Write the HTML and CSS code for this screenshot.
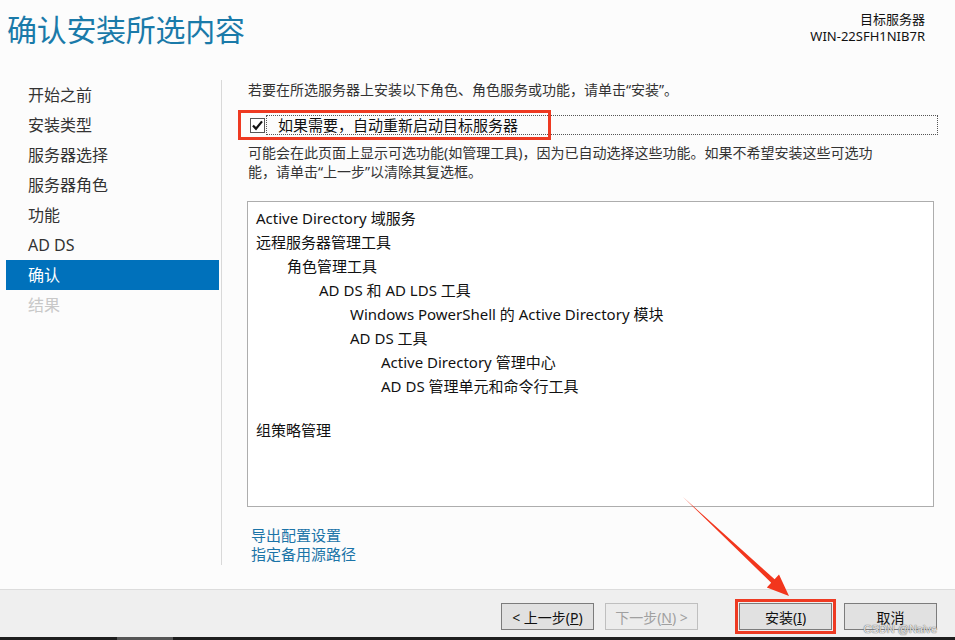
FILE: index.html
```html
<!DOCTYPE html>
<html lang="zh-CN">
<head>
	<meta charset="UTF-8">
	<title>确认安装所选内容</title>
	<link rel="stylesheet" href="styles.css">
</head>
<body>
<div class="win">
	<div class="head">
		<h1 class="title">确认安装所选内容</h1>
		<div class="target">
			<p>目标服务器</p>
			<p>WIN-22SFH1NIB7R</p>
		</div>
	</div>

	<div class="main">
		<ul class="nav">
			<li>开始之前</li>
			<li>安装类型</li>
			<li>服务器选择</li>
			<li>服务器角色</li>
			<li>功能</li>
			<li>AD DS</li>
			<li class="on">确认</li>
			<li class="off">结果</li>
		</ul>

		<div class="content">
			<p class="intro">若要在所选服务器上安装以下角色、角色服务或功能，请单击“安装”。</p>

			<div class="check">
				<span class="box">
					<svg width="15" height="15" viewBox="0 0 15 15"><rect x="0.5" y="0.5" width="14" height="14" fill="#fff" stroke="#555"/><path d="M3 7.4 L6 10.8 L12 3.4" fill="none" stroke="#111" stroke-width="2.2"/></svg>
				</span>
				<span class="label">如果需要，自动重新启动目标服务器</span>
				<span class="mark"></span>
			</div>

			<p class="note">可能会在此页面上显示可选功能(如管理工具)，因为已自动选择这些功能。如果不希望安装这些可选功能，请单击“上一步”以清除其复选框。</p>

			<div class="tree">
				<div class="item">Active Directory 域服务</div>
				<div class="item">远程服务器管理工具</div>
				<div class="item lv1">角色管理工具</div>
				<div class="item lv2">AD DS 和 AD LDS 工具</div>
				<div class="item lv3">Windows PowerShell 的 Active Directory 模块</div>
				<div class="item lv3">AD DS 工具</div>
				<div class="item lv4">Active Directory 管理中心</div>
				<div class="item lv4">AD DS 管理单元和命令行工具</div>
				<div class="item group">组策略管理</div>
			</div>

			<div class="links">
				<a href="#">导出配置设置</a>
				<a href="#">指定备用源路径</a>
			</div>
		</div>
	</div>

	<div class="bar">
		<button class="btn">&lt; 上一步(<u>P</u>)</button>
		<button class="btn" disabled>下一步(<u>N</u>) &gt;</button>
		<button class="btn install">安装(<u>I</u>)</button>
		<button class="btn">取消</button>
		<span class="wm">CSDN @Naive</span>
	</div>
	<div class="task"><span></span></div>

	<svg class="arrow" width="955" height="640" viewBox="0 0 955 640">
		<polygon points="683,497 771.2,582.8 766.8,587.6 789,596 779,574.4 774.6,579.2" fill="#f2361d"/>
	</svg>
</div>
</body>
</html>
```

FILE: styles.css
```css
*{padding:0;margin:0;list-style:none;box-sizing:border-box;}
body{
	background:#fcfcfc;
	font-family:"Noto Sans","Noto Sans CJK SC",sans-serif;
	color:#333;
	width:955px;
	height:640px;
	overflow:hidden;
}
.win{
	position:relative;
	height:640px;
	display:flex;
	flex-direction:column;
}
/*顶部*/
.head{
	height:80px;
	display:flex;
	justify-content:space-between;
	padding:10px 30px 0 7px;
}
.title{
	font-weight:normal;
	font-size:30px;
	line-height:40px;
	color:#1a7aa9;
	letter-spacing:-0.3px;
}
.target{
	text-align:right;
	font-size:13px;
	line-height:17px;
	color:#111;
	padding-top:1px;
}
/*主体*/
.main{
	flex:1;
	display:flex;
	align-items:flex-start;
}
.nav{
	width:213px;
	margin:0 2px 0 6px;
	font-size:16px;
}
.nav li{
	height:30px;
	line-height:30px;
	padding-left:22px;
}
.nav .on{
	background:#0071bb;
	color:#fff;
}
.nav .off{
	color:#c8c8c8;
}
.content{
	flex:1;
	border-left:1px solid #d9d9d9;
	padding:0 17px 0 26px;
	height:485px;
	font-size:14px;
}
.intro{
	line-height:19px;
}
.check{
	position:relative;
	display:flex;
	align-items:center;
	margin-top:16px;
	height:20px;
	margin-left:2px;
}
.check .box{
	width:16px;
	height:15px;
}
.check .label{
	flex:1;
	border:1px dotted #555;
	height:20px;
	line-height:18px;
	padding-left:11px;
	font-size:15px;
	color:#111;
}
.check .mark{
	position:absolute;
	left:-12px;
	top:-5px;
	width:313px;
	height:30px;
	border:3px solid #ee3a22;
}
.note{
	margin-top:8px;
	line-height:19px;
	width:634px;
}
.tree{
	margin:20px 4px 0 -1px;
	height:306px;
	background:#fff;
	border:1px solid #adadad;
	padding:4px 8px;
	font-size:15px;
	color:#111;
}
.tree .item{
	line-height:24px;
	height:24px;
	white-space:nowrap;
}
.tree .lv1{padding-left:31px;}
.tree .lv2{padding-left:63px;}
.tree .lv3{padding-left:94px;}
.tree .lv4{padding-left:125px;}
.tree .group{margin-top:20px;}
.links{
	margin:19px 0 0 3px;
	font-size:15px;
	line-height:19px;
}
.links a{
	display:block;
	color:#1b74a8;
	text-decoration:none;
}
/*底部按钮*/
.bar{
	position:relative;
	height:48px;
	border-top:1px solid #dcdcdc;
	background:#efefef;
	display:flex;
	justify-content:flex-end;
	padding:13px 18px 0 0;
}
.btn{
	width:93px;
	height:27px;
	margin-left:11px;
	background:#e1e1e1;
	border:1px solid #7c7c7c;
	font-family:"Noto Sans","Noto Sans CJK SC",sans-serif;
	font-size:14px;
	color:#111;
}
.btn[disabled]{
	border-color:#bfbfbf;
	color:#a0a0a0;
	background:#ececec;
}
.btn.install{
	margin-left:41px;
	margin-right:1px;
	outline:3px solid #ee3a22;
	outline-offset:1px;
}
.wm{
	position:absolute;
	right:18px;
	top:33px;
	font-family:"Liberation Sans",sans-serif;
	font-size:11px;
	line-height:12px;
	color:rgba(255,255,255,.85);
	text-shadow:0 0 1px #666,0 0 1px #666;
}
.task{
	height:3px;
	background:#1e1e1e;
	position:relative;
}
.task span{
	position:absolute;
	left:117px;
	width:56px;
	height:3px;
	background:#555;
}
.arrow{
	position:absolute;
	left:0;
	top:0;
	pointer-events:none;
}
```
